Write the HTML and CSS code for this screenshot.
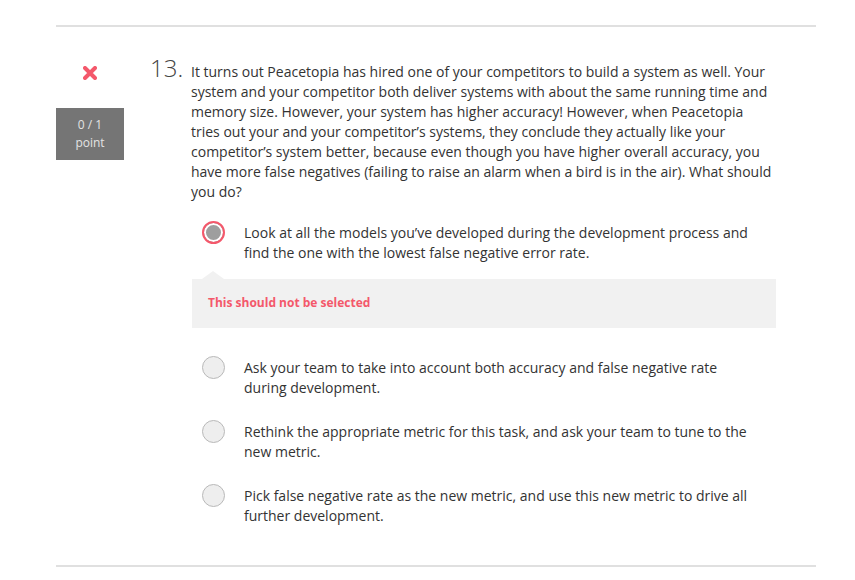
FILE: index.html
```html
<!DOCTYPE html>
<html lang="en">
<head>
<meta charset="utf-8">
<title>Quiz question 13</title>
<link rel="stylesheet" href="styles.css">
</head>
<body>
<div class="page">
  <div class="rule"></div>
  <div class="question">
    <div class="status">
      <svg class="wrong" width="14" height="14" viewBox="0 0 14 14" aria-hidden="true">
        <path d="M2 2 L12 12 M12 2 L2 12" stroke="#f4586b" stroke-width="4" stroke-linecap="round" fill="none"/>
      </svg>
      <div class="score">0 / 1<br>point</div>
    </div>
    <div class="body">
      <div class="prompt">
        <span class="num">13.</span>
        <p class="text">It turns out Peacetopia has hired one of your competitors to build a system as well. Your system and your competitor both deliver systems with about the same running time and memory size. However, your system has higher accuracy! However, when Peacetopia tries out your and your competitor’s systems, they conclude they actually like your competitor’s system better, because even though you have higher overall accuracy, you have more false negatives (failing to raise an alarm when a bird is in the air). What should you do?</p>
      </div>
      <div class="options">
        <div class="option-group selected">
          <div class="option">
            <span class="radio checked"></span>
            <span class="label">Look at all the models you’ve developed during the development process and find the one with the lowest false negative error rate.</span>
          </div>
          <div class="feedback">This should not be selected</div>
        </div>
        <div class="option">
          <span class="radio"></span>
          <span class="label">Ask your team to take into account both accuracy and false negative rate during development.</span>
        </div>
        <div class="option">
          <span class="radio"></span>
          <span class="label">Rethink the appropriate metric for this task, and ask your team to tune to the new metric.</span>
        </div>
        <div class="option">
          <span class="radio"></span>
          <span class="label">Pick false negative rate as the new metric, and use this new metric to drive all further development.</span>
        </div>
      </div>
    </div>
  </div>
  <div class="rule"></div>
</div>
</body>
</html>
```

FILE: styles.css
```css
* { box-sizing: border-box; }

html, body {
  margin: 0;
  padding: 0;
  background: #ffffff;
}

body {
  font-family: "Open Sans", "Noto Sans", sans-serif;
  color: #333333;
  font-size: 14px;
  line-height: 20px;
}

.page {
  width: 760px;
  margin-left: 56px;
  padding-top: 25px;
}

.rule {
  height: 2px;
  background: #e0e0e0;
}

.question {
  display: flex;
  padding-top: 31px;
  padding-bottom: 39px;
}

.status {
  width: 68px;
  margin-right: 26px;
  display: flex;
  flex-direction: column;
  align-items: center;
  padding-top: 8px;
}

.wrong {
  display: block;
}

.score {
  margin-top: 28px;
  width: 68px;
  height: 52px;
  padding-top: 8px;
  background: #757575;
  color: #e4e4e4;
  font-size: 12px;
  line-height: 18px;
  text-align: center;
}

.body {
  flex: 1;
}

.prompt {
  display: flex;
  align-items: baseline;
}

.num {
  width: 41px;
  flex: none;
  font-size: 24px;
  font-weight: 300;
  color: #444444;
  line-height: 20px;
}

.text {
  margin: 0;
  width: 584px;
}

.options {
  margin-left: 42px;
  width: 584px;
  margin-top: 21px;
  display: flex;
  flex-direction: column;
  gap: 24px;
}

.option {
  display: flex;
  align-items: flex-start;
  padding-left: 10px;
}

.radio {
  flex: none;
  width: 23px;
  height: 23px;
  margin-top: -2px;
  margin-right: 19px;
  border-radius: 50%;
  border: 1px solid #b9b9b9;
  background: #eeeeee;
}

.radio.checked {
  border: 2px solid #f4586b;
  background: #9e9e9e;
  box-shadow: inset 0 0 0 2px #ffffff;
}

.label {
  width: 510px;
}

.option-group {
  margin-bottom: 6px;
}

.feedback {
  position: relative;
  margin-top: 16px;
  height: 49px;
  padding: 15px 16px;
  background: #f1f1f1;
  color: #f4586b;
  font-size: 12px;
  font-weight: 700;
  line-height: 18px;
}

.feedback::before {
  content: "";
  position: absolute;
  top: -8px;
  left: 10px;
  border-left: 11px solid transparent;
  border-right: 11px solid transparent;
  border-bottom: 8px solid #f1f1f1;
}
```
